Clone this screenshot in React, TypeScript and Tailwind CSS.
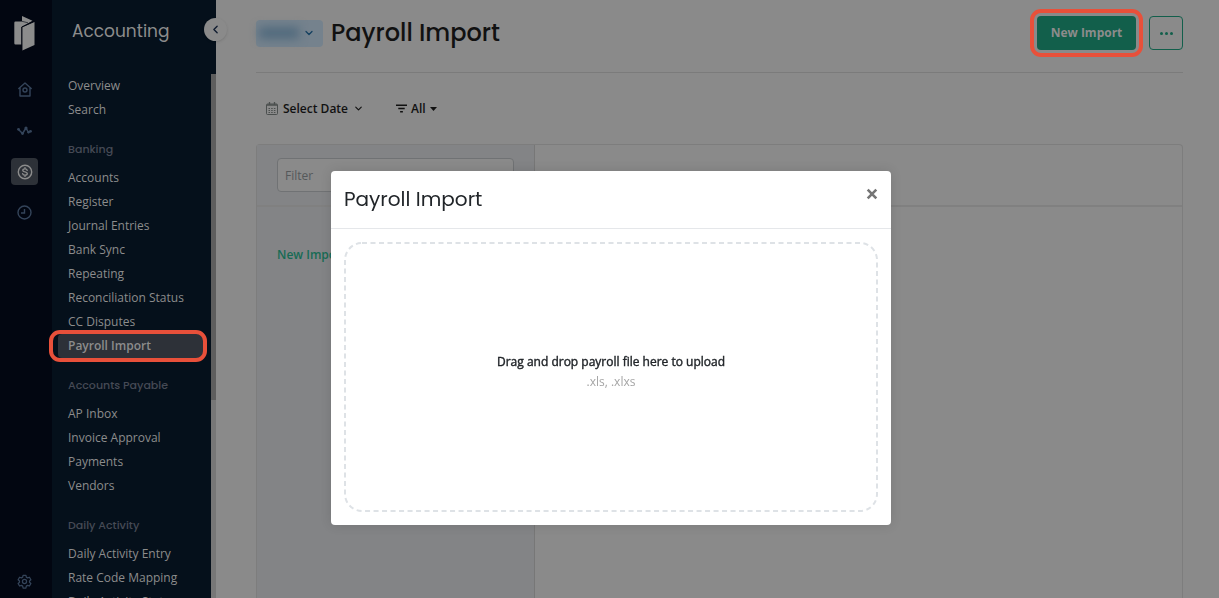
import React from "react";
import { ChevronDown, ChevronLeft } from "lucide-react";

const sections = [
  { title: "", items: ["Overview", "Search"] },
  {
    title: "Banking",
    items: ["Accounts", "Register", "Journal Entries", "Bank Sync", "Repeating", "Reconciliation Status", "CC Disputes", "Payroll Import"],
  },
  { title: "Accounts Payable", items: ["AP Inbox", "Invoice Approval", "Payments", "Vendors"] },
  { title: "Daily Activity", items: ["Daily Activity Entry", "Rate Code Mapping", "Daily Activity Status"] },
];

function Logo() {
  return (
    <svg width="21" height="35" viewBox="0 0 21 35" aria-hidden="true">
      <path d="M1.500 5.500H8V0l10.500 4.700L8 11v17.500H1.500Q.3 28.500.3 27.300V6.700q0-1.200 1.200-1.200z" fill="#8c8c8c" />
      <path d="M8.300 11.300 20.500 6v23L8.300 34.500z" fill="#8c8c8c" />
      <path d="M7.700 34V11L19.500 5.400" fill="none" stroke="#020611" strokeWidth="1" />
      <path d="M8 5.300 14 6.800" fill="none" stroke="#020611" strokeWidth=".6" />
    </svg>
  );
}

function HomeIcon() {
  return (
    <svg width="14" height="15" viewBox="0 0 14 15" fill="none" stroke="currentColor" strokeWidth="1.400" strokeLinejoin="round" strokeLinecap="round" aria-hidden="true">
      <path d="M.8 6.500 7 1l6.200 5.500M2 5.500V14h10V5.500" />
      <circle cx="7" cy="8" r="2" />
    </svg>
  );
}

function ActivityIcon() {
  return (
    <svg width="15" height="10" viewBox="0 0 15 10" fill="none" stroke="currentColor" strokeWidth="1.500" strokeLinejoin="round" aria-hidden="true">
      <path d="M1.500 3.500 5.500 7.500 9 2l2.500 4.500L13.500 5" />
      <g fill="currentColor" stroke="none">
        <circle cx="1.500" cy="3.300" r="1.400" />
        <circle cx="5.500" cy="7.500" r="1.400" />
        <circle cx="9" cy="2" r="1.600" />
        <circle cx="11.500" cy="6.200" r="1.200" />
        <circle cx="13.500" cy="5.300" r="1.400" />
      </g>
    </svg>
  );
}

function DollarIcon() {
  return (
    <svg width="16" height="16" viewBox="0 0 16 16" fill="none" stroke="currentColor" strokeWidth="1.400" strokeLinecap="round" aria-hidden="true">
      <circle cx="8" cy="8" r="6.700" />
      <path d="M10.200 6.300C10 5.300 9.100 4.900 8 4.900c-1.300 0-2.200.6-2.200 1.500C5.800 8.500 10.300 7.300 10.300 9.600c0 1-1 1.600-2.300 1.600-1.200 0-2.200-.5-2.400-1.500M8 3.600v1.200M8 11.200v1.200" />
    </svg>
  );
}

function ClockIcon() {
  return (
    <svg width="15" height="15" viewBox="0 0 15 15" fill="none" stroke="currentColor" strokeWidth="1.400" aria-hidden="true">
      <circle cx="7.500" cy="7.500" r="6.500" />
      <path d="M7.500 4v4H4" />
    </svg>
  );
}

function GearIcon() {
  return (
    <svg width="15" height="15" viewBox="0 0 24 24" fill="none" stroke="currentColor" strokeWidth="2" strokeLinejoin="round" aria-hidden="true">
      <path d="m9.700 2-.6 3-2 1.200-3-1L1.800 9.200 4 11.200v2l-2.200 2 2.300 4 3-1 2 1.200.6 3h4.600l.6-3 2-1.200 3 1 2.300-4-2.200-2v-2l2.200-2-2.300-4-3 1-2-1.200-.6-3z" />
      <circle cx="12" cy="12" r="3.300" />
    </svg>
  );
}

function CalendarIcon() {
  return (
    <svg width="12" height="13" viewBox="0 0 12 13" fill="none" stroke="#4b4f4e" aria-hidden="true">
      <rect x=".5" y="2" width="11" height="10.500" rx="1" />
      <path d="M3.500 0v3.500M8.500 0v3.500M1 3h10" strokeWidth="1.300" />
      <path d="M2.500 6.500h7M2.500 8.500h7M2.500 10.500h7" strokeWidth="1" strokeDasharray="1.500 1.200" />
    </svg>
  );
}

function Rail() {
  return (
    <nav aria-label="Modules" className="flex w-13 shrink-0 flex-col items-center bg-[#020611] pt-4 pr-[3px] text-[#34445a]">
      <a href="#" aria-label="Dashboard home">
        <Logo />
      </a>
      <div className="mt-[25px] flex grow flex-col gap-[14px]">
        <a href="#" aria-label="Home" className="flex size-[27px] items-center justify-center"><HomeIcon /></a>
        <a href="#" aria-label="Activity" className="flex size-[27px] items-center justify-center"><ActivityIcon /></a>
        <a href="#" aria-label="Accounting" className="flex size-[27px] items-center justify-center rounded-sm bg-[#2d3138] text-[#8c8c8c]"><DollarIcon /></a>
        <a href="#" aria-label="Time" className="flex size-[27px] items-center justify-center"><ClockIcon /></a>
      </div>
      <a href="#" aria-label="Settings" className="mb-[9px]"><GearIcon /></a>
    </nav>
  );
}

function Sidebar() {
  return (
    <aside className="relative flex w-41 shrink-0 flex-col bg-[#05101b]">
      <h2 className="h-[74px] shrink-0 pt-[17px] pl-5 font-[Poppins,Inter,sans-serif] text-[17px] leading-7 text-[#8c8c8c]">Accounting</h2>
      <button type="button" aria-label="Collapse menu" className="absolute top-[18px] -right-[11px] flex size-[23px] items-center justify-center rounded-full bg-[#8a8a8a] text-[#101c30] shadow">
        <ChevronLeft size={13} strokeWidth={2.500} />
      </button>
      <div className="flex grow justify-between">
        <nav aria-label="Accounting" className="grow pr-2 pl-[6px]">
          {sections.map((section) => (
            <div key={section.title}>
              {section.title && (
                <h3 className="mt-[15px] mb-[5px] pl-[10px] font-[Poppins,Inter,sans-serif] text-[11px] leading-6 font-medium text-[#454a55]">{section.title}</h3>
              )}
              <ul>
                {section.items.map((item) =>
                  item === "Payroll Import" ? (
                    <li key={item} className="relative">
                      <a href="#" aria-current="page" className="block rounded-sm bg-[#2d3138] pl-[10px] leading-6 font-semibold text-[#8c8c8c]">{item}</a>
                      <span className="pointer-events-none absolute -top-1 -right-1 -bottom-1 -left-[9px] rounded-[11px] border-4 border-[#e8503a]" />
                    </li>
                  ) : (
                    <li key={item}>
                      <a href="#" className="block pl-[10px] leading-6 whitespace-nowrap text-[#8c8c8c]">{item}</a>
                    </li>
                  ),
                )}
              </ul>
            </div>
          ))}
        </nav>
        <div className="w-[5px] shrink-0 bg-[#777777]">
          <div className="h-[326px] bg-[#5e5e5e]" />
        </div>
      </div>
    </aside>
  );
}

function UploadDialog() {
  return (
    <div className="fixed inset-0 flex items-start justify-center pt-[171px] pl-[3px]">
      <section role="dialog" aria-modal="true" aria-labelledby="dialog-title" className="w-full max-w-[560px] rounded-sm bg-white shadow-[0_0_12px_rgba(0,0,0,0.12)]">
        <header className="flex items-start justify-between border-b border-[#e5e7ea] px-[13px] pt-3 pb-[13px]">
          <h2 id="dialog-title" className="font-[Poppins,Inter,sans-serif] text-xl leading-8 text-[#212529]">Payroll Import</h2>
          <button type="button" aria-label="Close" className="flex h-[22px] w-3 items-center justify-center text-[#757575]">
            <svg width="12" height="12" viewBox="0 0 12 12" fill="none" stroke="currentColor" strokeWidth="2.600" aria-hidden="true">
              <path d="M1.700 1.700l8.600 8.600M10.300 1.700l-8.600 8.600" />
            </svg>
          </button>
        </header>
        <div className="p-[14px]">
          <div className="relative flex h-[268px] flex-col items-center justify-center pb-[10px] text-center">
            <svg className="pointer-events-none absolute inset-0 size-full overflow-visible" aria-hidden="true">
              <rect width="100%" height="100%" rx="17" fill="none" stroke="#dee2e6" strokeWidth="2" strokeDasharray="5 3.500" />
            </svg>
            <p className="leading-5 font-normal text-[#212529] [-webkit-text-stroke:0.4px]">Drag and drop payroll file here to upload</p>
            <p className="leading-5 text-[#a5a5a5]">.xls, .xlxs</p>
          </div>
        </div>
      </section>
    </div>
  );
}

export default function App() {
  return (
    <div className="flex h-screen overflow-hidden bg-[#8a8a8a] font-['Open_Sans',sans-serif] text-[12px] text-[#111111]">
      <Rail />
      <Sidebar />
      <main className="flex min-w-0 grow flex-col pr-9 pl-10">
        <header className="flex h-[73px] shrink-0 items-center border-b border-[#7b7b7b] pb-[6px]">
          <button type="button" aria-label="Select property" className="flex h-[27px] w-[67px] items-center justify-end rounded-sm bg-[#75828d] pr-2 text-[#123f5f]">
            <span className="mr-1 h-3 w-10 bg-[#516a7d] blur-[5px]" />
            <ChevronDown size={12} strokeWidth={2.500} />
          </button>
          <h1 className="ml-2 grow font-[Poppins,Inter,sans-serif] text-2xl font-medium">Payroll Import</h1>
          <div className="relative">
            <button type="button" className="block h-[34px] w-[99px] rounded-sm bg-[#125f4b] font-bold text-[#8c8c8c]">New Import</button>
            <span className="pointer-events-none absolute -inset-[7px] rounded-[11px] border-4 border-[#e8503a]" />
          </div>
          <button type="button" aria-label="More actions" className="ml-[13px] flex h-[34px] w-[34px] items-center justify-center gap-[2px] rounded-sm border border-[#125f4b]">
            <span className="size-[3px] rounded-full bg-[#125f4b]" />
            <span className="size-[3px] rounded-full bg-[#125f4b]" />
            <span className="size-[3px] rounded-full bg-[#125f4b]" />
          </button>
        </header>
        <div className="flex h-[71px] shrink-0 items-center gap-8 pl-[10px] font-semibold">
          <button type="button" className="flex items-center gap-[5px]">
            <CalendarIcon />
            Select Date
            <ChevronDown size={11} strokeWidth={2.500} />
          </button>
          <button type="button" className="flex items-center gap-1">
            <svg width="11" height="9" viewBox="0 0 12 9" stroke="#111111" strokeWidth="1.600" aria-hidden="true">
              <path d="M0 1h12M2.500 4.500h7M4.500 8h3" />
            </svg>
            All
            <svg width="7" height="4" viewBox="0 0 7 4" fill="#111111" aria-hidden="true">
              <path d="M0 0h7L3.500 4z" />
            </svg>
          </button>
        </div>
        <div className="flex grow flex-col rounded-t-sm border border-b-0 border-[#7d7d7d] bg-[#8a8a8a]">
          <div className="flex h-[62px] shrink-0 border-b-2 border-[#808080]">
            <div className="flex w-[278px] items-center border-r border-[#777777] bg-[#838486] px-5">
              <input aria-label="Filter" placeholder="Filter" className="h-[34px] w-full rounded-sm border border-[#707274] bg-[#8a8a8a] px-[7px] placeholder:text-[#55585a]" />
            </div>
          </div>
          <div className="flex grow">
            <div className="w-[278px] border-r border-[#777777] bg-[#838486] px-5 pt-[39px]">
              <a href="#" className="font-semibold text-[#176b54]">New Import</a>
            </div>
          </div>
        </div>
      </main>
      <UploadDialog />
    </div>
  );
}
